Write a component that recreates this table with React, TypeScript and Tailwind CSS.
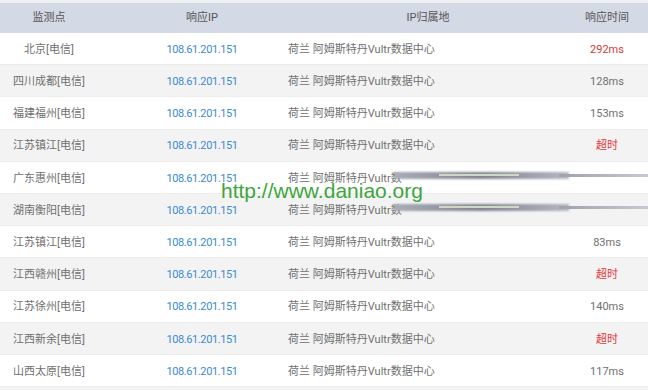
const ROWS = [
  { city: '北京[电信]', time: '292ms', tone: 'red' },
  { city: '四川成都[电信]', time: '128ms', tone: 'gray' },
  { city: '福建福州[电信]', time: '153ms', tone: 'gray' },
  { city: '江苏镇江[电信]', time: '超时', tone: 'alert' },
  { city: '广东惠州[电信]', time: '', tone: 'gray', smear: true },
  { city: '湖南衡阳[电信]', time: '', tone: 'gray', smear: true },
  { city: '江苏镇江[电信]', time: '83ms', tone: 'gray' },
  { city: '江西赣州[电信]', time: '超时', tone: 'alert' },
  { city: '江苏徐州[电信]', time: '140ms', tone: 'gray' },
  { city: '江西新余[电信]', time: '超时', tone: 'alert' },
  { city: '山西太原[电信]', time: '117ms', tone: 'gray' },
]

const IP = '108.61.201.151'
const LOCATION = '荷兰 阿姆斯特丹Vultr数据中心'

function Smear() {
  return (
    <div className="pointer-events-none absolute left-[394px] right-0 top-[9px] h-[9px]">
      <div className="absolute left-0 top-[1px] h-[7px] w-[175px] bg-linear-to-r from-[#a9adb6] via-[#7f848f] to-[#b4b8c4] blur-[1px]" />
      <div className="absolute left-[45px] top-[3px] h-[2px] w-[80px] bg-[#cfd8c8] blur-[0.5px]" />
      <div className="absolute left-[165px] right-0 top-[3px] h-[3px] bg-linear-to-r from-[#9ea2ab] to-[#c6c9d0] blur-[0.5px]" />
    </div>
  )
}

export default function App() {
  return (
    <div
      className="relative h-[390px] w-[648px] overflow-hidden bg-white text-[11px] text-[#707070]"
      style={{ fontFamily: 'Roboto, "Noto Sans CJK SC", sans-serif' }}
    >
      <div className="h-[3px] bg-[#eef0f3]" />
      <div className="grid h-[30px] grid-cols-[98px_190px_262px_98px] items-center bg-[#d3d9e5] pt-[1px] text-[#555]">
        <div className="text-center">监测点</div>
        <div className="pl-[18px] text-center">响应IP</div>
        <div className="pl-[18px] text-center">IP归属地</div>
        <div className="pl-[16px] text-center">响应时间</div>
      </div>

      {ROWS.map((row, i) => (
        <div
          key={i}
          className={`relative grid h-[32.2px] grid-cols-[98px_190px_262px_98px] items-center border-b border-[#ececec] pt-[3px] ${
            i % 2 === 1 ? 'bg-[#f3f3f3]' : 'bg-white'
          }`}
        >
          <div className="text-center">{row.city}</div>
          <div className="pl-[18px] text-center tracking-[-0.4px] text-[#3c8bcf]">{IP}</div>
          <div className="whitespace-nowrap">{row.smear ? '荷兰 阿姆斯特丹Vultr数' : LOCATION}</div>
          <div
            className={`pl-[16px] text-center ${
              row.tone === 'red' ? 'text-[#d23a3a]' : row.tone === 'alert' ? 'text-[#e3373c]' : ''
            }`}
          >
            {row.time}
          </div>
          {row.smear && <Smear />}
        </div>
      ))}
      <div className="h-[10px] bg-[#f3f3f3]" />

      <div
        className="pointer-events-none absolute left-[221px] top-[180px] text-[21px] leading-none text-[#3ea63e]"
        style={{ fontFamily: '"Liberation Sans", Arial, sans-serif' }}
      >
        http://www.daniao.org
      </div>
    </div>
  )
}
